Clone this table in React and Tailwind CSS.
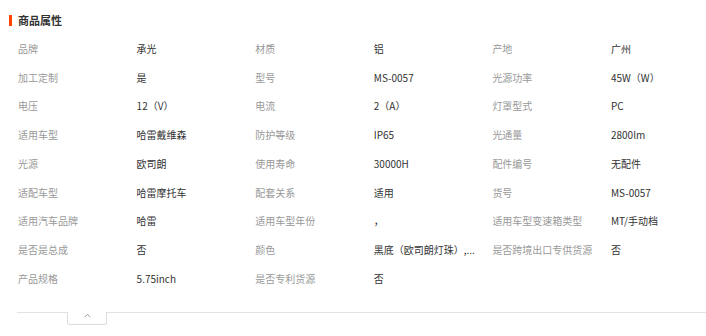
import React from "react";

const rows = [
  ["品牌", "承光", "材质", "铝", "产地", "广州"],
  ["加工定制", "是", "型号", "MS-0057", "光源功率", "45W（W）"],
  ["电压", "12（V）", "电流", "2（A）", "灯罩型式", "PC"],
  ["适用车型", "哈雷戴维森", "防护等级", "IP65", "光通量", "2800lm"],
  ["光源", "欧司朗", "使用寿命", "30000H", "配件编号", "无配件"],
  ["适配车型", "哈雷摩托车", "配套关系", "适用", "货号", "MS-0057"],
  ["适用汽车品牌", "哈雷", "适用车型年份", "，", "适用车型变速箱类型", "MT/手动档"],
  ["是否是总成", "否", "颜色", "黑底（欧司朗灯珠）,...", "是否跨境出口专供货源", "否"],
  ["产品规格", "5.75inch", "是否专利货源", "否", "", ""],
];

export default function App() {
  return (
    <div
      className="w-[706px] h-[336px] bg-white overflow-hidden relative"
      style={{ fontFamily: '"Noto Sans CJK SC", "Noto Sans", sans-serif' }}
    >
      <div className="flex items-center pt-[15px] pl-[9px] h-[25px]">
        <div className="w-[3px] h-[11px] bg-[#ff4400]" />
        <div className="ml-[6px] text-[11px] leading-[11px] font-bold text-[#333]">商品属性</div>
      </div>
      <div className="pl-[18px] pt-[9px]">
        {rows.map((r, i) => (
          <div key={i} className="grid grid-cols-[repeat(6,118.6px)] h-[28.75px] items-center text-[10px] whitespace-nowrap">
            {r.map((c, j) => (
              <div key={j} className={j % 2 === 0 ? "text-[#999]" : "text-[#333]"}>
                {c}
              </div>
            ))}
          </div>
        ))}
      </div>
      <div className="absolute left-[17px] right-0 top-[312px] h-px bg-[#e3e3e3]" />
      <div className="absolute left-[67px] top-[312px] w-[40px] h-[13px] bg-white border border-t-0 border-[#dcdcdc] rounded-b-[3px] flex items-start justify-center">
        <svg width="7" height="5" viewBox="0 0 7 5" className="mt-[1px]">
          <path d="M0.8 4 L3.5 1.3 L6.2 4" fill="none" stroke="#999" strokeWidth="1" />
        </svg>
      </div>
    </div>
  );
}
